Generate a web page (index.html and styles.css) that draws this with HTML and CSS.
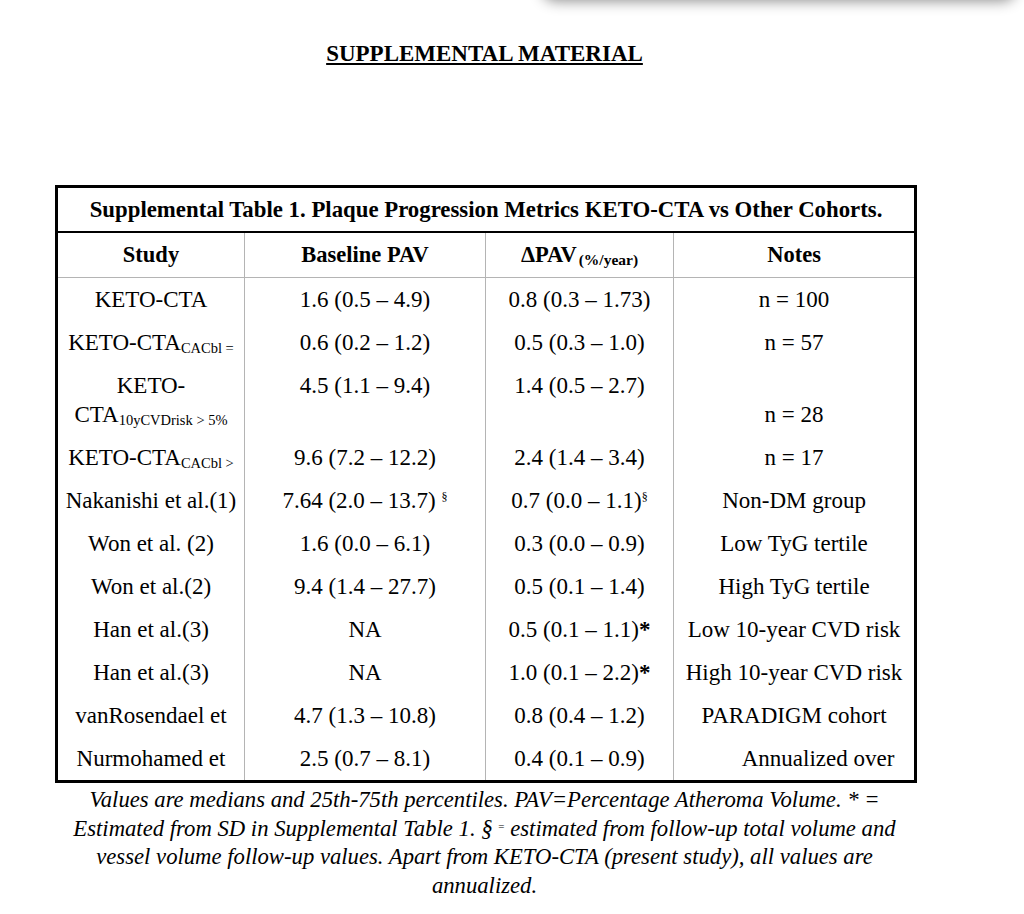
FILE: index.html
```html
<!DOCTYPE html>
<html lang="en">
<head>
<meta charset="utf-8">
<title>Supplemental Material</title>
<link rel="stylesheet" href="styles.css">
</head>
<body>
<div class="card-edge"></div>
<main class="page">
  <h1 class="heading">SUPPLEMENTAL MATERIAL</h1>
  <table class="metrics">
    <colgroup>
      <col class="c-study">
      <col class="c-base">
      <col class="c-delta">
      <col class="c-notes">
    </colgroup>
    <thead>
      <tr><th colspan="4" class="caption-cell">Supplemental Table 1. Plaque Progression Metrics KETO-CTA vs Other Cohorts.</th></tr>
      <tr class="head-row">
        <th>Study</th>
        <th>Baseline PAV</th>
        <th>ΔPAV<span class="sub-b">(%/year)</span></th>
        <th>Notes</th>
      </tr>
    </thead>
    <tbody>
      <tr><td>KETO-CTA</td><td>1.6 (0.5 – 4.9)</td><td>0.8 (0.3 – 1.73)</td><td>n = 100</td></tr>
      <tr><td>KETO-CTA<span class="sub">CACbl =</span></td><td>0.6 (0.2 – 1.2)</td><td>0.5 (0.3 – 1.0)</td><td>n = 57</td></tr>
      <tr class="tall"><td>KETO-<br>CTA<span class="sub">10yCVDrisk &gt; 5%</span></td><td class="top">4.5 (1.1 – 9.4)</td><td class="top">1.4 (0.5 – 2.7)</td><td class="bottom">n = 28</td></tr>
      <tr><td>KETO-CTA<span class="sub">CACbl &gt;</span></td><td>9.6 (7.2 – 12.2)</td><td>2.4 (1.4 – 3.4)</td><td>n = 17</td></tr>
      <tr><td>Nakanishi et al.(1)</td><td>7.64 (2.0 – 13.7) <span class="sup">§</span></td><td>0.7 (0.0 – 1.1)<span class="sup">§</span></td><td>Non-DM group</td></tr>
      <tr><td>Won et al. (2)</td><td>1.6 (0.0 – 6.1)</td><td>0.3 (0.0 – 0.9)</td><td>Low TyG tertile</td></tr>
      <tr><td>Won et al.(2)</td><td>9.4 (1.4 – 27.7)</td><td>0.5 (0.1 – 1.4)</td><td>High TyG tertile</td></tr>
      <tr><td>Han et al.(3)</td><td>NA</td><td>0.5 (0.1 – 1.1)<b>*</b></td><td>Low 10-year CVD risk</td></tr>
      <tr><td>Han et al.(3)</td><td>NA</td><td>1.0 (0.1 – 2.2)<b>*</b></td><td>High 10-year CVD risk</td></tr>
      <tr><td>vanRosendael et</td><td>4.7 (1.3 – 10.8)</td><td>0.8 (0.4 – 1.2)</td><td>PARADIGM cohort</td></tr>
      <tr><td>Nurmohamed et</td><td>2.5 (0.7 – 8.1)</td><td>0.4 (0.1 – 0.9)</td><td class="shift">Annualized over</td></tr>
    </tbody>
  </table>
  <p class="footnote">Values are medians and 25th-75th percentiles. PAV=Percentage Atheroma Volume. * =<br>Estimated from SD in Supplemental Table 1. § <span class="tiny">=</span> estimated from follow-up total volume and<br>vessel volume follow-up values. Apart from KETO-CTA (present study), all values are<br>annualized.</p>
</main>
</body>
</html>
```

FILE: styles.css
```css
html, body {
  margin: 0;
  padding: 0;
  background: #ffffff;
}

body {
  font-family: "Liberation Serif", "Times New Roman", serif;
  color: #000;
  position: relative;
  min-height: 914px;
  overflow: hidden;
}

.card-edge {
  position: absolute;
  top: -30px;
  left: 542px;
  width: 474px;
  height: 28px;
  background: #fff;
  border-radius: 16px;
  box-shadow: 0 3px 14px rgba(0, 0, 0, 0.45);
}

.page {
  width: 859px;
  margin-left: 55px;
}

.heading {
  margin: 0;
  padding-top: 40px;
  font-size: 23px;
  line-height: 27px;
  font-weight: bold;
  text-align: center;
  text-decoration: underline;
  text-decoration-thickness: 2px;
  text-underline-offset: 2px;
}

.metrics {
  margin-top: 118px;
  width: 859px;
  table-layout: fixed;
  border-collapse: collapse;
  border: 3px solid #000;
  font-size: 23px;
  line-height: 29px;
}

.c-study { width: 188px; }
.c-base { width: 241px; }
.c-delta { width: 188px; }
.c-notes { width: 242px; }

.metrics th,
.metrics td {
  padding: 7px 0;
  text-align: center;
  vertical-align: middle;
  border-left: 1px solid #b4b4b4;
  border-right: 1px solid #b4b4b4;
  white-space: nowrap;
}

.metrics th {
  font-size: 22.5px;
  font-weight: bold;
}

.metrics .caption-cell {
  font-size: 22.8px;
  border-bottom: 2px solid #000;
  border-left: 0;
  border-right: 0;
}

.head-row th {
  border-bottom: 1px solid #b4b4b4;
  padding: 7px 0 8px;
}

.metrics td.top { vertical-align: top; }
.metrics td.bottom { vertical-align: bottom; }
.metrics td.shift { padding-left: 48px; }

.sub {
  font-size: 14.5px;
  vertical-align: -3px;
  line-height: 0;
}

.sub-b {
  font-size: 15.5px;
  font-weight: bold;
  vertical-align: -3px;
  line-height: 0;
  margin-left: 2px;
}

.sup {
  font-size: 12px;
  vertical-align: 7px;
  line-height: 0;
}

.footnote {
  margin: 3px 0 0;
  font-size: 22.7px;
  line-height: 28.7px;
  font-style: italic;
  text-align: center;
}

.tiny {
  font-size: 11px;
  vertical-align: 6px;
  font-style: normal;
  line-height: 0;
}
```
